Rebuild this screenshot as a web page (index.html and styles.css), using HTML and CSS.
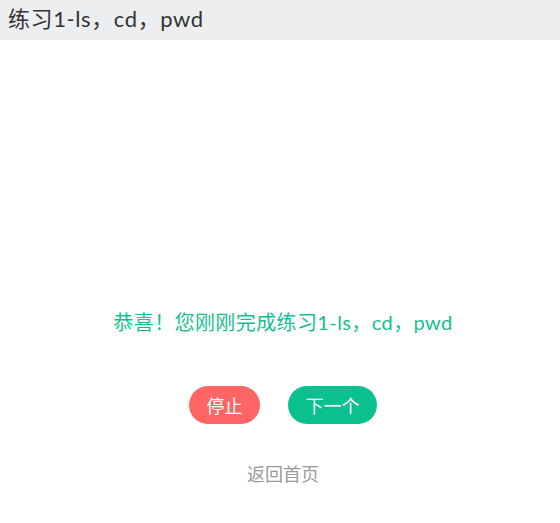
FILE: index.html
```html
<!DOCTYPE html>
<html>
<head>
<meta charset="utf-8">
<link rel="stylesheet" href="styles.css">
</head>
<body>
<div class="header">练习1-ls，cd，pwd</div>
<div class="main">
  <div class="msg">恭喜！您刚刚完成练习1-ls，cd，pwd</div>
  <div class="actions">
    <button class="btn stop">停止</button>
    <button class="btn next">下一个</button>
  </div>
  <div class="back">返回首页</div>
</div>
</body>
</html>
```
FILE: styles.css
```css
html, body { margin: 0; padding: 0; background: #fff; }
body { font-family: Lato, "Noto Sans CJK SC", sans-serif; }
.header {
  height: 40px;
  background: #eceef0;
  color: #333;
  font-size: 22px;
  letter-spacing: 0.6px;
  line-height: 38px;
  padding-left: 8px;
}
.main {
  display: flex;
  flex-direction: column;
  align-items: center;
  padding-top: 268px;
}
.msg {
  color: #15bf8f;
  font-size: 20px;
  letter-spacing: 0.4px;
  line-height: 28px;
  margin-left: 6px;
}
.actions {
  display: flex;
  gap: 28px;
  margin-top: 50px;
  margin-left: 6px;
}
.btn {
  border: none;
  height: 38px;
  border-radius: 19px;
  color: #fff;
  font-family: Lato, "Noto Sans CJK SC", sans-serif;
  font-size: 18px;
  padding: 0;
}
.stop { background: #ff6565; width: 71px; }
.next { background: #0bc08f; width: 89px; }
.back {
  margin-top: 37px;
  color: #999;
  font-size: 18px;
  line-height: 26px;
  margin-left: 6px;
}
```
